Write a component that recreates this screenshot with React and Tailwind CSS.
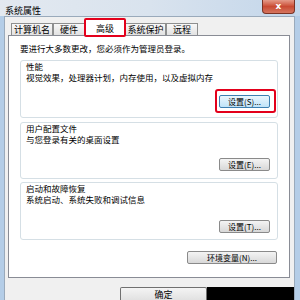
import React from 'react';

const cjk = { fontFamily: '"Noto Sans CJK SC", "Liberation Sans", sans-serif' };

const Tab = ({ label, width, active }) => (
    <div
        className={`relative flex items-center justify-center border border-b-0 border-[#8e8f8f] ${width} ${
            active ? 'h-[17px] -mb-px z-10 bg-white' : 'h-[12px] bg-gradient-to-b from-[#f8f8f8] to-[#e2e2e2]'
        }`}
    >
        <span className="text-[9px] leading-[11px] text-black">{label}</span>
        {active && <span className="absolute -left-[2px] -right-[2px] -top-[2px] -bottom-[1px] border-2 border-[#e3001b] rounded-[2px]"></span>}
    </div>
);

const WinButton = ({ label, width, focused, highlight }) => (
    <div
        className={`relative flex items-center justify-center h-[13px] ${width} rounded-[2px] border ${
            focused
                ? 'border-[#3c7fb1] bg-gradient-to-b from-[#eaf6fd] to-[#bfe3f8]'
                : 'border-[#8a8a8a] bg-gradient-to-b from-[#f4f4f4] to-[#d8d8d8]'
        }`}
    >
        <span className="text-[8px] leading-[10px] text-black whitespace-nowrap">{label}</span>
        {highlight && <span className="absolute -left-[5px] -right-[7px] -top-[7px] -bottom-[6px] border-2 border-[#e3001b] rounded-[3px]"></span>}
    </div>
);

const Group = ({ title, desc, button, className }) => (
    <div className={`border border-[#d5dfe5] rounded-[3px] pl-[5px] pr-[7px] ${className}`}>
        <div className="text-[8.5px] leading-[11px] text-black">{title}</div>
        <div className="text-[8.5px] leading-[11px] text-black">{desc}</div>
        <div className="flex justify-end">{button}</div>
    </div>
);

export default function App() {
    return (
        <div className="w-[300px] h-[300px] overflow-hidden flex flex-col bg-[#b4cde7]" style={cjk}>
            {/* title bar */}
            <div className="h-[21px] flex items-start bg-gradient-to-r from-[#e3e9f0] via-[#d9e3ee] to-[#c3d6ea]">
                <span className="pl-[5px] pt-[5px] text-[9px] leading-[11px] text-black">系统属性</span>
                <div className="ml-auto mr-[5px] w-[33px] h-[14px] rounded-b-[4px] border border-t-0 border-[#7a3325] bg-gradient-to-b from-[#e49a89] via-[#c94a33] to-[#d4745e] flex items-center justify-center">
                    <span className="text-white text-[9px] font-bold leading-none" style={{ fontFamily: '"DejaVu Sans", sans-serif' }}>x</span>
                </div>
            </div>

            <div className="flex-1 flex pl-[4px] pr-[6px]">
                <div className="flex-1 flex flex-col bg-[#f0f0f0] border-l border-t border-r border-[#9aaabb]">
                    {/* tabs */}
                    <div className="h-[18px] flex items-end pl-[6px]">
                        <Tab label="计算机名" width="w-[42px]" />
                        <Tab label="硬件" width="w-[32px]" />
                        <Tab label="高级" width="w-[40px]" active />
                        <Tab label="系统保护" width="w-[41px]" />
                        <Tab label="远程" width="w-[32px]" />
                    </div>

                    {/* panel */}
                    <div className="ml-[3px] w-[282px] h-[243px] border border-[#898c95] bg-white px-[11px] pt-[7px]">
                        <div className="text-[8.5px] leading-[11px] text-black">要进行大多数更改，您必须作为管理员登录。</div>

                        <Group
                            className="mt-[6px] pb-[9px]"
                            title="性能"
                            desc="视觉效果，处理器计划，内存使用，以及虚拟内存"
                            button={<div className="mt-[12px]"><WinButton label="设置(S)..." width="w-[51px]" focused highlight /></div>}
                        />
                        <Group
                            className="mt-[4px] pb-[7px]"
                            title="用户配置文件"
                            desc="与您登录有关的桌面设置"
                            button={<div className="mt-[13px]"><WinButton label="设置(E)..." width="w-[51px]" /></div>}
                        />
                        <Group
                            className="mt-[3px] pb-[6px]"
                            title="启动和故障恢复"
                            desc="系统启动、系统失败和调试信息"
                            button={<div className="mt-[15px]"><WinButton label="设置(T)..." width="w-[51px]" /></div>}
                        />

                        <div className="flex justify-end mt-[11px] pr-[1px]">
                            <WinButton label="环境变量(N)..." width="w-[90px]" />
                        </div>
                    </div>

                    {/* bottom buttons */}
                    <div className="flex mt-[9px] pl-[115px]">
                        <div className="w-[87px] h-[14px] border border-[#707070] border-b-0 rounded-t-[2px] bg-gradient-to-b from-[#f4f4f4] to-[#e0e0e0] flex justify-center pt-[1px]">
                            <span className="text-[9px] leading-[11px] text-black">确定</span>
                        </div>
                        <div className="w-[87px] h-[14px] bg-black"></div>
                    </div>
                </div>
            </div>
        </div>
    );
}
